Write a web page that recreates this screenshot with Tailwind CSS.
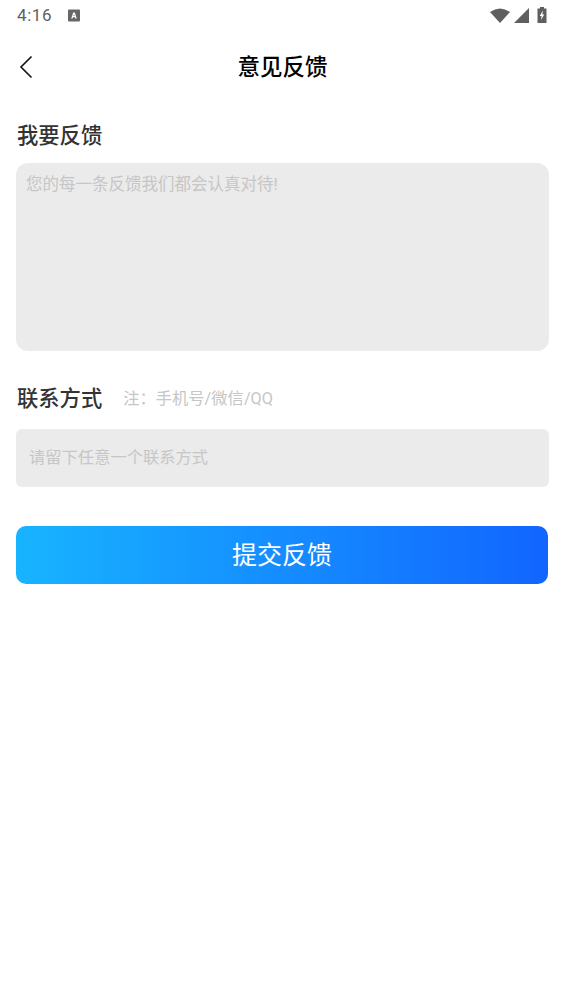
<!DOCTYPE html>
<html lang="zh-CN">
<head>
<meta charset="utf-8">
<script src="https://cdn.jsdelivr.net/npm/@tailwindcss/browser@4"></script>
</head>
<body class="bg-white font-['Roboto','Noto_Sans_CJK_SC',sans-serif]">
<div class="w-[565px] h-[1004px] overflow-hidden flex flex-col">
  <div class="h-[30px] flex items-center justify-between pl-[17px] pr-[18px] text-[#666]">
    <div class="flex items-center">
      <span class="text-[17px] leading-[30px] tracking-[0.6px] text-[#5f5f5f]">4:16</span>
      <svg class="ml-[16px]" width="12" height="13" viewBox="0 0 12 13"><rect x="0" y="0.5" width="12" height="12" rx="1" fill="#666"/><path d="M3.2 9.5 L5.2 3.5 H6.8 L8.8 9.5 H7.4 L7 8.2 H5 L4.6 9.5 Z M5.4 7 H6.6 L6 5.2 Z" fill="#fff"/></svg>
    </div>
    <div class="flex items-center">
      <svg width="20" height="15" viewBox="0 0 20 15"><path d="M0 4 Q10 -3 20 4 L10 15 Z" fill="#5f5f5f"/></svg>
      <svg class="ml-[4px]" width="15" height="15" viewBox="0 0 15 15"><path d="M0 15 L15 0 V15 Z" fill="#5f5f5f"/></svg>
      <svg class="ml-[8px]" width="10" height="16" viewBox="0 0 10 16"><path d="M3 0 H7 V1.5 H9.5 V16 H0.5 V1.5 H3 Z" fill="#5f5f5f"/><path d="M5.8 3.5 L2.8 9 H4.6 L4 13 L7.2 7.4 H5.4 Z" fill="#fff"/></svg>
    </div>
  </div>
  <div class="relative h-[74px] flex items-center justify-center">
    <svg class="absolute left-[19px] top-[25px]" width="14" height="24" viewBox="0 0 14 24"><path d="M12.5 1.5 L2 12 L12.5 22.5" fill="none" stroke="#111" stroke-width="1.6"/></svg>
    <h1 class="text-[22.5px] leading-[30px] font-medium text-black">意见反馈</h1>
  </div>
  <div class="px-[16px] pt-[17px] flex flex-col">
    <h2 class="pl-[1px] text-[21.3px] leading-[30px] font-medium text-[#333]">我要反馈</h2>
    <div class="mt-[12px] w-[533px] h-[188px] rounded-[12px] bg-[#ebebeb] pl-[10px] pr-[11px] pt-[11px] text-[16.5px] leading-[22px] text-[#c6c6c6]">您的每一条反馈我们都会认真对待!</div>
    <div class="mt-[33px] pl-[1px] flex items-center h-[30px]">
      <h2 class="text-[21.3px] leading-[30px] font-medium text-[#333]">联系方式</h2>
      <span class="ml-[21px] text-[16.3px] text-[#c6c6c6]">注：手机号/微信/QQ</span>
    </div>
    <div class="mt-[15px] w-[533px] h-[58px] rounded-[6px] bg-[#ebebeb] pl-[13px] pt-[1px] flex items-center text-[16.3px] text-[#c6c6c6]">请留下任意一个联系方式</div>
    <button class="mt-[39px] w-[532px] h-[58px] rounded-[10px] bg-linear-to-r/srgb from-[#18b4ff] to-[#1265ff] text-white text-[25px] pt-[1px] flex items-center justify-center">提交反馈</button>
  </div>
</div>
</body>
</html>
